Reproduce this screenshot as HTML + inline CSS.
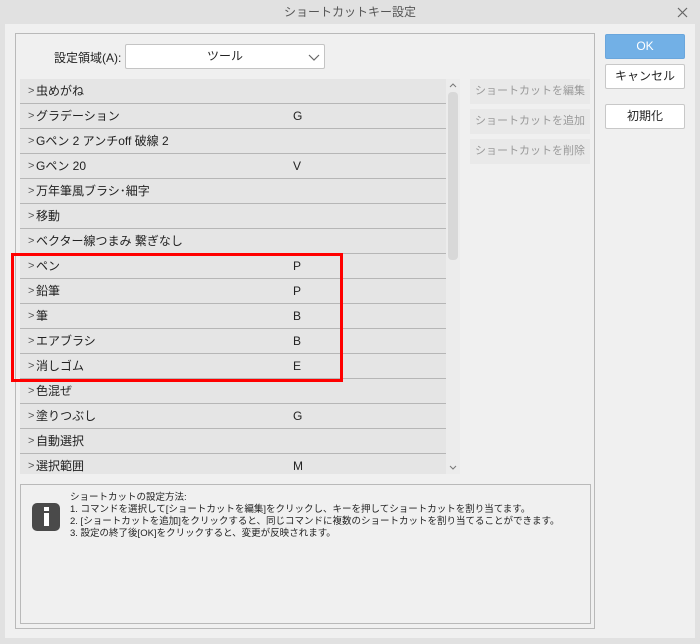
<!DOCTYPE html>
<html><head><meta charset="utf-8"><style>
*{box-sizing:border-box;margin:0;padding:0}
body{width:700px;height:644px;background:#e1e1e1;font-family:"Liberation Sans","Noto Sans CJK JP",sans-serif;font-size:12px;color:#222;position:relative;overflow:hidden}
.abs{position:absolute}
.title{left:0;top:0;width:700px;height:24px;text-align:center;line-height:24px;color:#555;font-size:12px}
.win{left:5px;top:24px;width:690px;height:614px;background:#f0f0f0}
.grp{left:15px;top:33px;width:580px;height:596px;border:1px solid #b9b9b9}
.combo{left:125px;top:44px;width:200px;height:25px;background:#fff;border:1px solid #c4c4c4;border-radius:2px;text-align:center;line-height:23px}
.list{left:20px;top:79px;width:426px;height:395px;background:#e5e5e5;overflow:hidden}
.row{height:25px;border-bottom:1px solid #b6b6b6;position:relative;line-height:24px}
.row span.a{position:absolute;left:8px;color:#555;font-size:11px}
.row span.n{position:absolute;left:16px}
.row span.k{position:absolute;left:273px}
.sb{left:446px;top:79px;width:14px;height:395px;background:#ececec}
.thumb{left:448px;top:92px;width:10px;height:168px;background:#d8d8d8;border-radius:4px}
.btn{width:120px;height:25px;background:#e9e9e9;color:#9a9a9a;text-align:center;line-height:24px;left:470px;font-size:11px}
.rb{left:605px;width:80px;height:25px;background:#fff;border:1px solid #c8c8c8;border-radius:2px;text-align:center;line-height:23px}
.info{left:20px;top:484px;width:571px;height:140px;border:1px solid #b9b9b9}
.red{left:11px;top:253px;width:332px;height:129px;border:3px solid #f00}
</style></head><body>
<div class="abs title">ショートカットキー設定</div>
<svg class="abs" style="left:677px;top:7px" width="11" height="11"><path d="M1 1 L10 10 M10 1 L1 10" stroke="#666" stroke-width="1.2"/></svg>
<div class="abs win"></div>
<div class="abs grp"></div>
<div class="abs" style="left:54px;top:49px">設定領域(A):</div>
<div class="abs combo">ツール</div>
<svg class="abs" style="left:308px;top:52px" width="12" height="10"><path d="M1 3 L6 8 L11 3" fill="none" stroke="#666" stroke-width="1.2"/></svg>
<div class="abs list">
<div class="row"><span class="a">&gt;</span><span class="n">虫めがね</span></div>
<div class="row"><span class="a">&gt;</span><span class="n">グラデーション</span><span class="k">G</span></div>
<div class="row"><span class="a">&gt;</span><span class="n">Gペン 2 アンチoff 破線 2</span></div>
<div class="row"><span class="a">&gt;</span><span class="n">Gペン 20</span><span class="k">V</span></div>
<div class="row"><span class="a">&gt;</span><span class="n">万年筆風ブラシ･細字</span></div>
<div class="row"><span class="a">&gt;</span><span class="n">移動</span></div>
<div class="row"><span class="a">&gt;</span><span class="n">ベクター線つまみ 繋ぎなし</span></div>
<div class="row"><span class="a">&gt;</span><span class="n">ペン</span><span class="k">P</span></div>
<div class="row"><span class="a">&gt;</span><span class="n">鉛筆</span><span class="k">P</span></div>
<div class="row"><span class="a">&gt;</span><span class="n">筆</span><span class="k">B</span></div>
<div class="row"><span class="a">&gt;</span><span class="n">エアブラシ</span><span class="k">B</span></div>
<div class="row"><span class="a">&gt;</span><span class="n">消しゴム</span><span class="k">E</span></div>
<div class="row"><span class="a">&gt;</span><span class="n">色混ぜ</span></div>
<div class="row"><span class="a">&gt;</span><span class="n">塗りつぶし</span><span class="k">G</span></div>
<div class="row"><span class="a">&gt;</span><span class="n">自動選択</span></div>
<div class="row"><span class="a">&gt;</span><span class="n">選択範囲</span><span class="k">M</span></div>
</div>
<div class="abs sb"></div>
<div class="abs thumb"></div>
<svg class="abs" style="left:448px;top:82px" width="10" height="8"><path d="M2 5 L5 2 L8 5" fill="none" stroke="#777"/></svg>
<svg class="abs" style="left:448px;top:463px" width="10" height="8"><path d="M2 3 L5 6 L8 3" fill="none" stroke="#777"/></svg>
<div class="abs btn" style="top:79px">ショートカットを編集</div>
<div class="abs btn" style="top:109px">ショートカットを追加</div>
<div class="abs btn" style="top:139px">ショートカットを削除</div>
<div class="abs rb" style="top:34px;background:#72b0e6;border-color:#6aa6dc;color:#fff">OK</div>
<div class="abs rb" style="top:64px">キャンセル</div>
<div class="abs rb" style="top:104px">初期化</div>
<div class="abs info"></div>
<div class="abs" style="left:32px;top:503px;width:28px;height:28px;background:#4a4a4a;border-radius:5px"></div>
<div class="abs" style="left:44px;top:507px;width:5px;height:4px;background:#fff"></div>
<div class="abs" style="left:44px;top:513px;width:5px;height:13px;background:#fff"></div>
<div class="abs" style="left:70px;top:492px;font-size:9.5px;line-height:12px;color:#222;white-space:nowrap">ショートカットの設定方法:<br>1. コマンドを選択して[ショートカットを編集]をクリックし、キーを押してショートカットを割り当てます。<br>2. [ショートカットを追加]をクリックすると、同じコマンドに複数のショートカットを割り当てることができます。<br>3. 設定の終了後[OK]をクリックすると、変更が反映されます。</div>
<div class="abs red"></div>
</body></html>
